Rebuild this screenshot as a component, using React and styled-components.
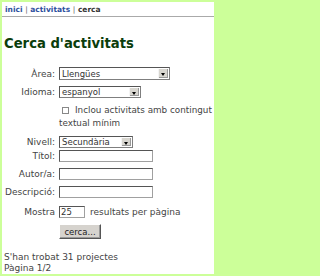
import React from 'react';
import styled, { createGlobalStyle } from 'styled-components';

const GlobalStyle = createGlobalStyle`
  html, body {
    margin: 0;
    padding: 0;
    background: #ccff99;
  }
  body {
    width: 217px;
    height: 276px;
    overflow: hidden;
    font-family: "DejaVu Sans", Verdana, sans-serif;
  }
`;

const Page = styled.div`
  margin: 2px 3px 2px 2px;
  width: 212px;
  height: 272px;
  background: #fff;
  box-sizing: border-box;
  padding: 3px 0 0 2px;
  color: #444;
  font-size: 9px;
`;

const Crumbs = styled.div`
  font-size: 7.5px;
  font-weight: bold;
  line-height: 9px;
  color: #333;
  padding-left: 1px;

  a {
    color: #2d4f9e;
    text-decoration: none;
  }
  span {
    color: #666;
    font-weight: normal;
  }
`;

const Rule = styled.div`
  height: 1px;
  background: #aaa;
  margin: 2px 0 0 -2px;
`;

const Title = styled.h1`
  margin: 18px 0 0 0;
  font-size: 13.2px;
  line-height: 18px;
  font-weight: bold;
  color: #0b3d0b;
`;

const Form = styled.form`
  margin-top: 14px;
`;

const Row = styled.div`
  display: grid;
  grid-template-columns: 51px 1fr;
  column-gap: 4px;
  align-items: center;
  margin-top: ${(p) => p.$top || 0}px;
`;

const Label = styled.label`
  text-align: right;
  white-space: nowrap;
  line-height: 12px;
  grid-column: 1;
`;

const Field = styled.div`
  grid-column: 2;
  display: flex;
  align-items: center;
  gap: 5px;
`;

const SelectBox = styled.div`
  position: relative;
  width: ${(p) => p.$w}px;
  height: ${(p) => p.$h || 12}px;
  box-sizing: border-box;
  border: 1px solid #7f7f7f;
  border-top-color: #555;
  border-left-color: #555;
  background: #fff;

  select {
    appearance: none;
    border: 0;
    margin: 0;
    padding: 0 0 0 2px;
    width: 100%;
    height: 100%;
    background: transparent;
    font-family: Tahoma, "DejaVu Sans", sans-serif;
    font-size: 8.5px;
    color: #333;
    outline: none;
  }
`;

const Arrow = styled.span`
  position: absolute;
  top: 1px;
  right: 1px;
  bottom: 1px;
  width: 9px;
  background: #d8d6d0;
  border-left: 1px solid #f4f4f4;
  box-shadow: inset -1px -1px 0 #999;
  pointer-events: none;

  &::after {
    content: '';
    position: absolute;
    left: 2px;
    top: 4px;
    border-left: 2.5px solid transparent;
    border-right: 2.5px solid transparent;
    border-top: 3px solid #000;
  }
`;

const Text = styled.input`
  width: ${(p) => p.$w}px;
  height: 12px;
  box-sizing: border-box;
  margin: 0;
  padding: 0 1px;
  border: 1px solid #a0a0a0;
  border-top-color: #555;
  border-left-color: #555;
  font-family: Tahoma, "DejaVu Sans", sans-serif;
  font-size: 8.5px;
  color: #333;
  outline: none;
`;

const Check = styled.div`
  grid-column: 2;
  line-height: 13px;
  font-size: 8.8px;
  color: #444;

  input {
    appearance: none;
    width: 7px;
    height: 7px;
    margin: 0 6px 0 3px;
    border: 1px solid #888;
    background: #fff;
    vertical-align: -1px;
  }
`;

const Button = styled.button`
  width: 42px;
  height: 15px;
  margin: 0;
  padding: 0;
  background: #d6d3ce;
  border: 1px solid;
  border-color: #fff #555 #555 #fff;
  box-shadow: inset -1px -1px 0 #999;
  font-family: Tahoma, "DejaVu Sans", sans-serif;
  font-size: 8.5px;
  color: #222;
`;

const Results = styled.div`
  margin-top: 13px;
  line-height: 11px;
  color: #444;
`;

const Select = ({ w, h, value }) => (
  <SelectBox $w={w} $h={h}>
    <select defaultValue={value}>
      <option>{value}</option>
    </select>
    <Arrow />
  </SelectBox>
);

export default function App() {
  return (
    <>
      <GlobalStyle />
      <Page>
        <Crumbs>
          <a href="#">inici</a> <span>|</span> <a href="#">activitats</a> <span>|</span> cerca
        </Crumbs>
        <Rule />
        <Title>Cerca d'activitats</Title>
        <Form onSubmit={(e) => e.preventDefault()}>
          <Row>
            <Label>Àrea:</Label>
            <Field><Select w={111} h={13} value="Llengües" /></Field>
          </Row>
          <Row $top={6}>
            <Label>Idioma:</Label>
            <Field><Select w={82} value="espanyol" /></Field>
          </Row>
          <Row $top={6}>
            <Check>
              <input type="checkbox" />Inclou activitats amb contingut textual mínim
            </Check>
          </Row>
          <Row $top={6}>
            <Label>Nivell:</Label>
            <Field><Select w={74} value="Secundària" /></Field>
          </Row>
          <Row $top={2}>
            <Label>Títol:</Label>
            <Field><Text $w={94} /></Field>
          </Row>
          <Row $top={6}>
            <Label>Autor/a:</Label>
            <Field><Text $w={94} /></Field>
          </Row>
          <Row $top={6}>
            <Label>Descripció:</Label>
            <Field><Text $w={94} /></Field>
          </Row>
          <Row $top={8}>
            <Label>Mostra</Label>
            <Field>
              <Text $w={26} defaultValue="25" />
              <span>resultats per pàgina</span>
            </Field>
          </Row>
          <Row $top={6}>
            <Field><Button type="submit">cerca...</Button></Field>
          </Row>
        </Form>
        <Results>
          S'han trobat 31 projectes<br />
          Pàgina 1/2
        </Results>
      </Page>
    </>
  );
}
